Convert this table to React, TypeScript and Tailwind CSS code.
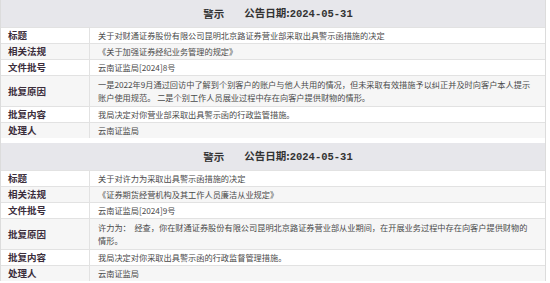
import React from 'react';

type Notice = {
  title: string;
  law: string;
  docNo: string;
  reason: React.ReactNode;
  content: string;
  handler: string;
};

const notices: Notice[] = [
  {
    title: '关于对财通证券股份有限公司昆明北京路证券营业部采取出具警示函措施的决定',
    law: '《关于加强证券经纪业务管理的规定》',
    docNo: '云南证监局[2024]8号',
    reason: (
      <>
        一是2022年9月通过回访中了解到个别客户的账户与他人共用的情况，但未采取有效措施予以纠正并及时向客户本人提示
        <br />
        账户使用规范。 二是个别工作人员展业过程中存在向客户提供财物的情形。
      </>
    ),
    content: '我局决定对你营业部采取出具警示函的行政监管措施。',
    handler: '云南证监局',
  },
  {
    title: '关于对许力为采取出具警示函措施的决定',
    law: '《证券期货经营机构及其工作人员廉洁从业规定》',
    docNo: '云南证监局[2024]9号',
    reason: (
      <>
        许力为：&nbsp;&nbsp;经查，你在财通证券股份有限公司昆明北京路证券营业部从业期间，在开展业务过程中存在向客户提供财物的
        <br />
        情形。
      </>
    ),
    content: '我局决定对你采取出具警示函的行政监督管理措施。',
    handler: '云南证监局',
  },
];

function Row({ label, shaded, tall, children }: { label: string; shaded?: boolean; tall?: boolean; children: React.ReactNode }) {
  return (
    <div
      className={`flex border-t border-[#e2e2e2] ${tall ? 'h-[31px]' : 'h-4'} ${shaded ? 'bg-[#f6f6f6]' : 'bg-white'}`}
    >
      <div className="w-[89px] shrink-0 border-r border-[#e2e2e2] pl-[7px] flex items-center text-[9.5px] font-bold text-[#3b2d3b]">
        {label}
      </div>
      <div className="flex-1 min-w-0 pl-[8px] flex items-center text-[8.2px] leading-[13px] text-[#4a4a4a] whitespace-nowrap">
        <div>{children}</div>
      </div>
    </div>
  );
}

function NoticeTable({ notice }: { notice: Notice }) {
  return (
    <div>
      {/* Header */}
      <div className="h-[27px] bg-[#e7e7eb] flex items-center justify-center gap-[20px] font-bold text-[10.5px] text-[#333] pl-[10px]">
        <span>警示</span>
        <span>
          公告日期:<span className="font-['Liberation_Mono',monospace]">2024-05-31</span>
        </span>
      </div>
      <Row label="标题">{notice.title}</Row>
      <Row label="相关法规" shaded>{notice.law}</Row>
      <Row label="文件批号">{notice.docNo}</Row>
      <Row label="批复原因" shaded tall>{notice.reason}</Row>
      <Row label="批复内容">{notice.content}</Row>
      <Row label="处理人" shaded>{notice.handler}</Row>
    </div>
  );
}

export default function App() {
  return (
    <div className="w-[550px] h-[283px] bg-white overflow-hidden font-['Noto_Sans_CJK_SC','Noto_Sans',sans-serif]">
      <div className="w-[546px] border-l border-r border-[#dcdcdc] flex flex-col gap-[5px]">
        {notices.map((n, i) => (
          <NoticeTable key={i} notice={n} />
        ))}
      </div>
    </div>
  );
}
